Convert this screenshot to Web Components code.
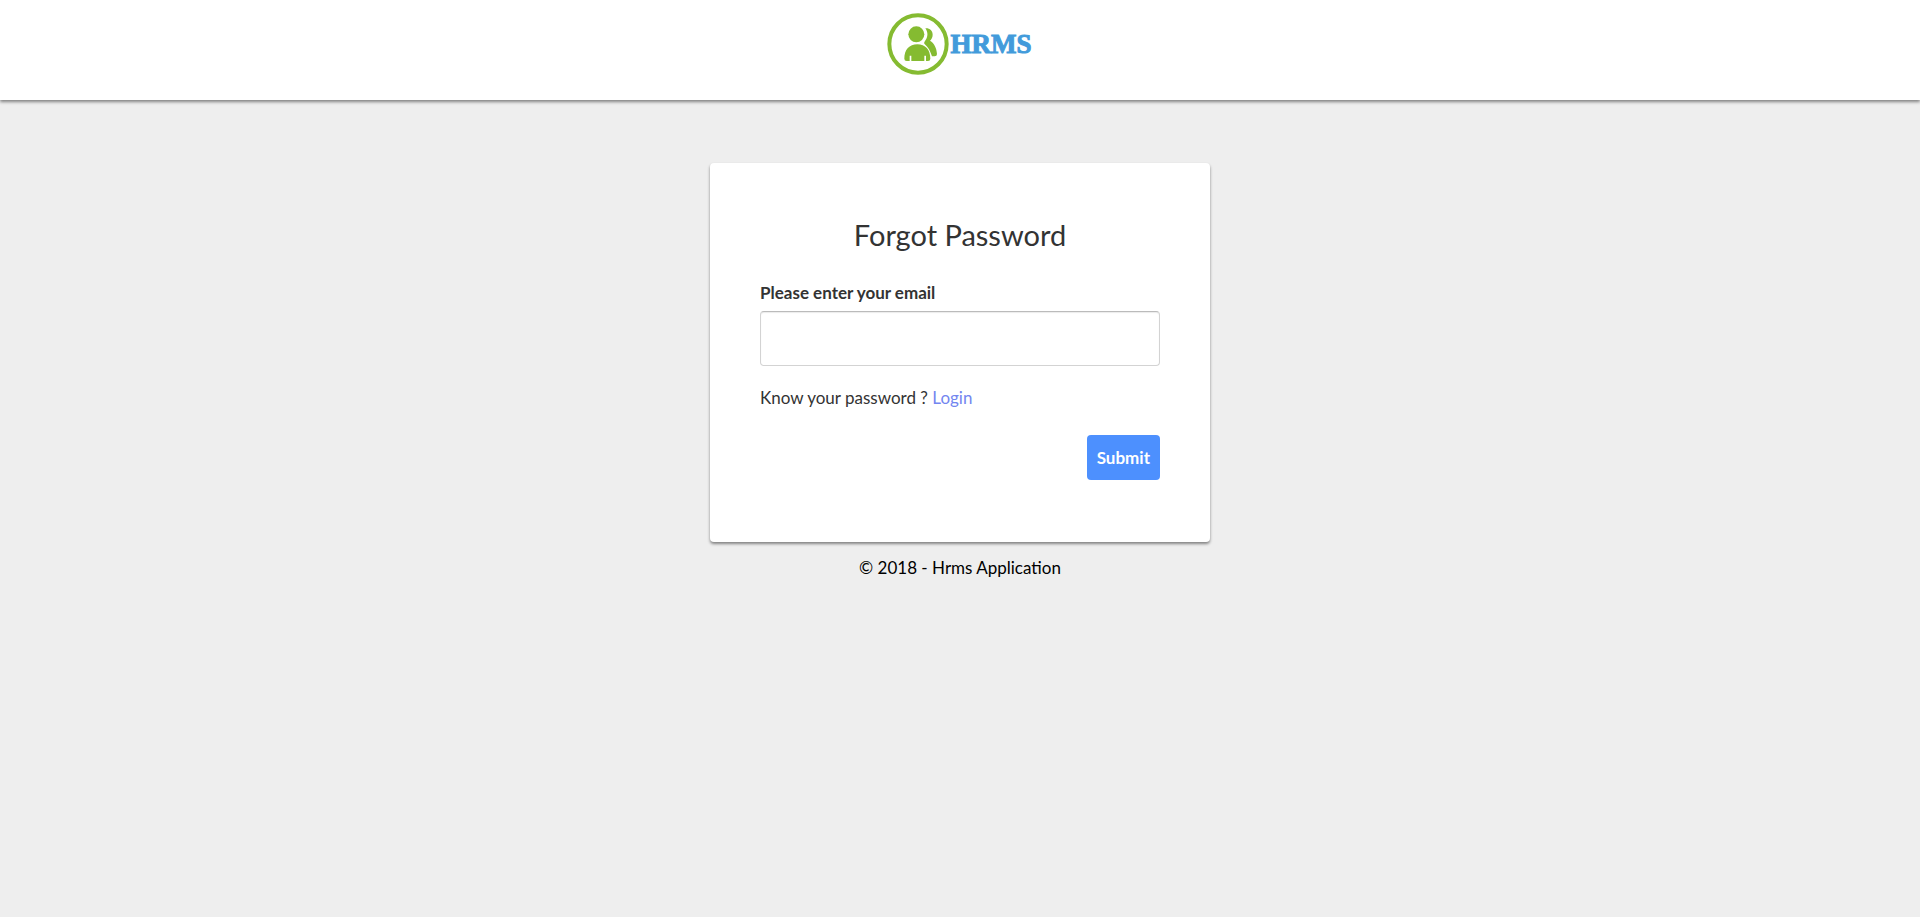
<!DOCTYPE html>
<html lang="en">
<head>
<meta charset="utf-8">
<meta name="viewport" content="width=device-width, initial-scale=1">
<title>Forgot Password - HRMS</title>
<style>
  body {
    margin: 0;
    min-height: 100vh;
    background: #eee;
    color: #333;
    font: 17px/24px Lato, "Open Sans", sans-serif;
  }
</style>
</head>
<body>
<hrms-page>
  <hrms-header slot="header"><hrms-logo>HRMS</hrms-logo></hrms-header>
  <forgot-card>
    <span slot="title">Forgot Password</span>
  </forgot-card>
  <span slot="footer">© 2018 - Hrms Application</span>
</hrms-page>

<script>
class HrmsPage extends HTMLElement {
  constructor() {
    super();
    this.attachShadow({ mode: "open" }).innerHTML = `
      <style>
        :host { display: block; }
        main { display: flex; justify-content: center; padding: 63px 16px 0; }
        footer { margin-top: 14px; padding-bottom: 24px; text-align: center; color: #000; }
      </style>
      <slot name="header"></slot>
      <main><slot></slot></main>
      <footer><slot name="footer"></slot></footer>`;
  }
}

class HrmsHeader extends HTMLElement {
  constructor() {
    super();
    this.attachShadow({ mode: "open" }).innerHTML = `
      <style>
        :host { display: block; }
        header {
          display: flex;
          justify-content: center;
          padding: 13px 0 25px;
          background: #fff;
          box-shadow: 0 2px 3px rgba(0, 0, 0, .45);
        }
      </style>
      <header><slot></slot></header>`;
  }
}

class HrmsLogo extends HTMLElement {
  constructor() {
    super();
    this.attachShadow({ mode: "open" }).innerHTML = `
      <style>
        :host {
          display: flex;
          align-items: center;
          gap: 2px;
          padding-right: 2px;
          color: #429bdb;
          font: bold 27px/32px "Liberation Serif", serif;
          -webkit-text-stroke: 1px #429bdb;
        }
        svg { display: block; width: 62px; height: 62px; }
      </style>
      <svg viewBox="22 14 186 186" aria-hidden="true">
        <circle cx="115" cy="107" r="86" fill="none" stroke="#85bb31" stroke-width="12"/>
        <g fill="#85bb31">
          <circle cx="110" cy="78" r="24"/>
          <path d="M137 60C150 59 159 67 159 79C159 87 155 93 151 97C164 105 171 119 172 137Q172 144 165 144H157C152 128 146 116 134 106C133 103 134 101 136 98C145 87 146 72 137 60Z"/>
          <path d="M74 151C74 124 89 108 113 108C137 108 152 124 152 151Q152 158 145 158H139V142H134V158H95V142H90V158H81Q74 158 74 151Z"/>
        </g>
      </svg>
      <span><slot></slot></span>`;
  }
}

class ForgotCard extends HTMLElement {
  constructor() {
    super();
    this.attachShadow({ mode: "open" }).innerHTML = `
      <style>
        :host {
          display: block;
          box-sizing: border-box;
          width: 100%;
          max-width: 500px;
          padding: 50px 50px 62px;
          border-radius: 4px;
          background: #fff;
          box-shadow: 0 2px 3px rgba(0, 0, 0, .45);
        }
        h1 { margin: 0 0 24px; font-size: 29px; line-height: 44px; font-weight: 400; text-align: center; }
        label { display: block; margin-bottom: 6px; font-weight: 700; }
        input {
          display: block;
          box-sizing: border-box;
          width: 100%;
          height: 55px;
          padding: 6px 12px;
          border: 1px solid #d3d3d3;
          border-top-color: #bbb;
          border-radius: 4px;
          background: #fff;
          box-shadow: inset 0 1px 1px rgba(0, 0, 0, .08);
          font: inherit;
        }
        p { margin: 20px 0 25px; }
        a { color: #7386f0; text-decoration: none; }
        .actions { display: flex; justify-content: flex-end; }
        button {
          height: 45px;
          padding: 0 10px;
          border: 0;
          border-radius: 4px;
          background: #4d90fe;
          color: #fff;
          font: inherit;
          font-weight: 700;
        }
      </style>
      <h1><slot name="title"></slot></h1>
      <form>
        <label for="email">Please enter your email</label>
        <input id="email" type="email" name="email">
        <p>Know your password ? <a href="#login">Login</a></p>
        <div class="actions"><button type="submit">Submit</button></div>
      </form>`;
  }
}

customElements.define("hrms-page", HrmsPage);
customElements.define("hrms-header", HrmsHeader);
customElements.define("hrms-logo", HrmsLogo);
customElements.define("forgot-card", ForgotCard);
</script>
</body>
</html>
